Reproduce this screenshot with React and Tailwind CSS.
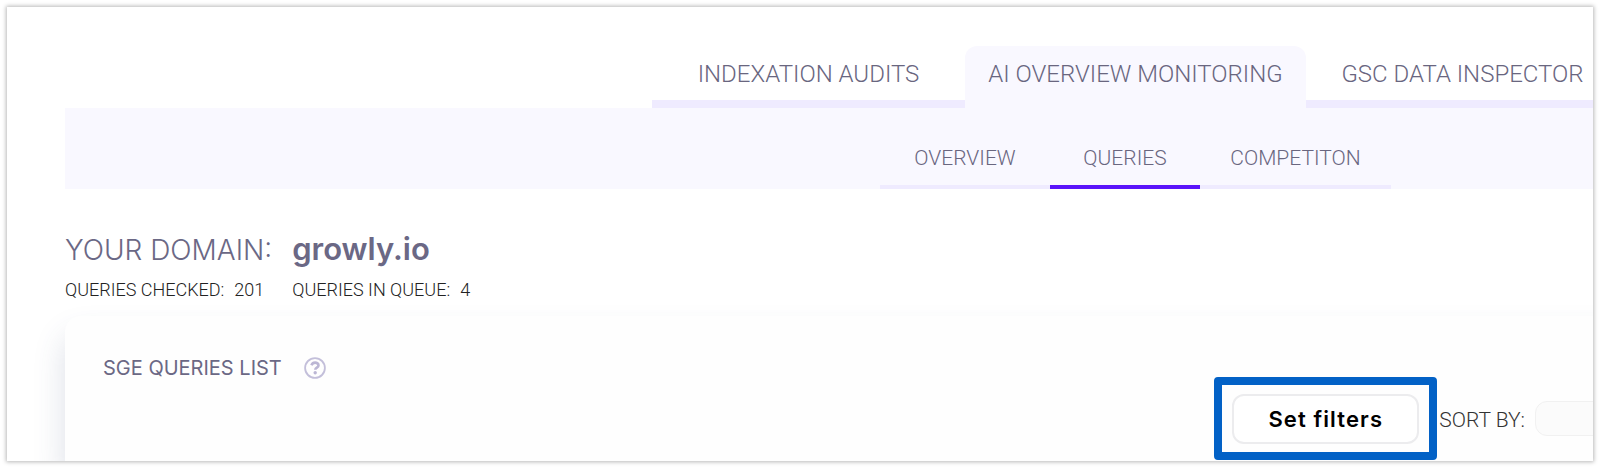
const sections = [
  { label: "INDEXATION AUDITS", width: "w-[313px]" },
  { label: "AI OVERVIEW MONITORING", width: "w-[341px]", active: true },
  { label: "GSC DATA INSPECTOR", width: "w-[313px]" },
];

const views = [
  { label: "OVERVIEW", width: "w-[170px]" },
  { label: "QUERIES", width: "w-[150px]", active: true },
  { label: "COMPETITON", width: "w-[191px]" },
];

function SectionTabs() {
  return (
    <nav aria-label="Sections" className="-mr-[26px] flex justify-end pt-[39px]">
      {sections.map((s) => (
        <a
          key={s.label}
          href="#"
          aria-current={s.active ? "page" : undefined}
          className={`${s.width} flex h-[62px] shrink-0 justify-center whitespace-nowrap border-b-8 pt-3 text-2xl leading-8 ${
            s.active ? "rounded-t-xl border-[#f9f8ff] bg-[#f9f8ff]" : "border-[#efebff]"
          }`}
        >
          {s.label}
        </a>
      ))}
    </nav>
  );
}

function ViewTabs() {
  return (
    <nav aria-label="Views" className="ml-[58px] flex justify-end bg-[#f9f8ff] pr-[202px] pt-8">
      {views.map((v) => (
        <a
          key={v.label}
          href="#"
          aria-current={v.active ? "page" : undefined}
          className={`${v.width} flex h-[49px] shrink-0 justify-center border-b-4 pt-0.5 text-[21px] leading-8 ${
            v.active ? "border-[#5a14fa]" : "border-[#efebff]"
          }`}
        >
          {v.label}
        </a>
      ))}
    </nav>
  );
}

function HelpIcon() {
  return (
    <svg viewBox="0 0 22 22" className="size-[22px]" fill="none" aria-hidden="true">
      <circle cx="11" cy="11" r="9.9" stroke="#c3bfda" strokeWidth="1.8" />
      <path
        d="M7.4 8.2C8.2 6.3 9.4 5.6 11.1 5.6c1.9 0 3.4 1 3.4 2.8 0 2.2-3.2 2.3-3.2 4.3"
        stroke="#bbb6d4"
        strokeWidth="2.6"
      />
      <circle cx="11.2" cy="15.8" r="1.7" fill="#bbb6d4" />
    </svg>
  );
}

export default function App() {
  return (
    <main className="mx-[7px] mb-2 mt-[7px] overflow-hidden bg-white font-['Roboto',sans-serif] font-light text-[#69667f] shadow-[0_0_4px_1px_rgba(0,0,0,0.28)]">
      <SectionTabs />
      <ViewTabs />

      <header className="pl-[58px] pt-10">
        <h1 className="flex items-baseline gap-5 font-['Inter',sans-serif] text-[28px] leading-10 text-[#6b6885]">
          <span className="font-light">YOUR DOMAIN:</span>
          <strong className="text-[31px] font-semibold">growly.io</strong>
        </h1>
        <dl className="mt-1.5 flex text-lg leading-7 text-[#222]">
          <dt>QUERIES CHECKED:</dt>
          <dd className="ml-2.5 mr-7">201</dd>
          <dt>QUERIES IN QUEUE:</dt>
          <dd className="ml-2.5">4</dd>
        </dl>
      </header>

      <section className="-mr-8 ml-[58px] mt-3 rounded-tl-2xl bg-[#fefefe] pl-[38px] pr-8 pt-[38px] shadow-[0_20px_32px_rgba(60,80,120,0.18)]">
        <div className="flex items-center gap-[22px]">
          <h2 className="font-['Inter',sans-serif] text-xl leading-7 font-normal text-[#6b6885]">
            SGE QUERIES LIST
          </h2>
          <button type="button" aria-label="Help">
            <HelpIcon />
          </button>
        </div>

        <div className="-mt-[5px] flex items-center justify-end pb-px">
          <div className="rounded border-8 border-[#0261c6] px-2.5 pb-2 pt-[9px]">
            <button
              type="button"
              className="h-[50px] w-[187px] rounded-xl border-2 border-[#ececee] bg-white font-['Inter',sans-serif] text-[22px] font-semibold tracking-wider text-black"
            >
              Set filters
            </button>
          </div>
          <label htmlFor="sort" className="ml-0.5 mr-2.5 whitespace-nowrap pt-0.5 text-[21px] leading-8 text-[#333]">
            SORT BY:
          </label>
          <div className="w-[58px]">
            <select
              id="sort"
              className="h-[35px] w-48 appearance-none rounded-xl border border-[#f1f1f1] bg-[#fbfbfb]"
            >
              <option value=""></option>
            </select>
          </div>
        </div>
      </section>
    </main>
  );
}
